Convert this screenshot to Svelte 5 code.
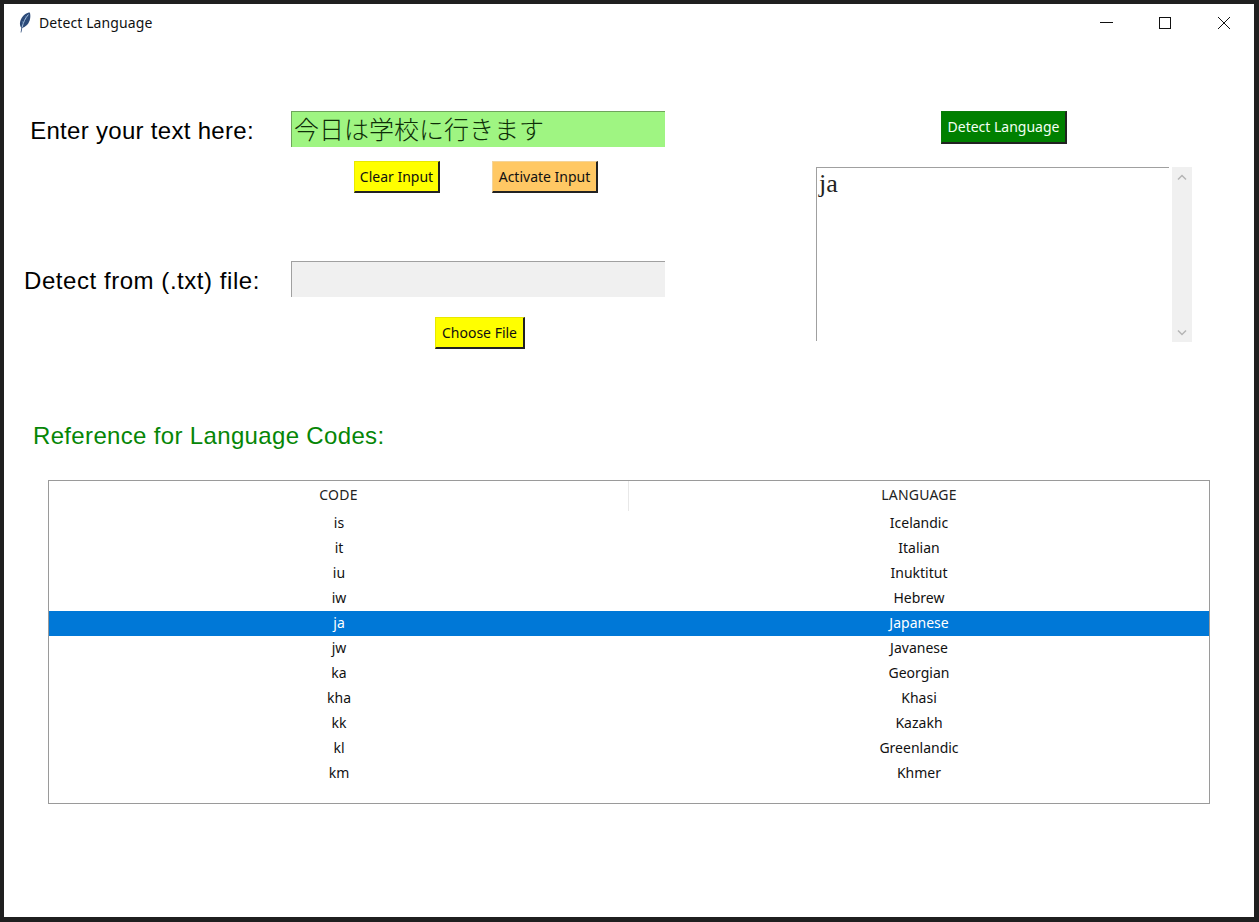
<script lang="ts">
  const rows = [
    ['is', 'Icelandic'],
    ['it', 'Italian'],
    ['iu', 'Inuktitut'],
    ['iw', 'Hebrew'],
    ['ja', 'Japanese'],
    ['jw', 'Javanese'],
    ['ka', 'Georgian'],
    ['kha', 'Khasi'],
    ['kk', 'Kazakh'],
    ['kl', 'Greenlandic'],
    ['km', 'Khmer']
  ];
  const selected = 'ja';
</script>

<div class="window">
  <div class="titlebar">
    <svg class="feather" width="14" height="21" viewBox="0 0 14 21">
      <path d="M2.6 20.5 C3 18.5 3.2 17 3.4 15.6 C1 13.5 1.2 7 7 2.2 C8.6 1 10.6 0.4 11.8 0.4 C13 3.5 12.4 9.5 9 13 C7.4 14.6 5.4 15.6 4.3 15.8 C4 17.4 3.7 19 3.3 20.5 Z" fill="#2c4a78" />
      <path d="M10.4 2.6 C7.4 6 5.2 10.4 4.2 15" stroke="#a9c3e0" stroke-width="1" fill="none" />
      <path d="M4 9.5 L5.6 11 M7.4 4.6 L8.8 6.2" stroke="#6f93bd" stroke-width="0.8" fill="none" />
    </svg>
    <span class="title">Detect Language</span>
    <div class="controls">
      <svg width="14" height="14" viewBox="0 0 14 14"><path d="M0 6.5H13" stroke="#111" fill="none" /></svg>
      <svg width="14" height="14" viewBox="0 0 14 14"><rect x="1.5" y="1.5" width="11" height="11" stroke="#111" fill="none" /></svg>
      <svg width="14" height="14" viewBox="0 0 14 14"><path d="M1 1L13 13M13 1L1 13" stroke="#111" fill="none" /></svg>
    </div>
  </div>

  <div class="top">
    <div class="form">
      <label class="lbl" for="txt">Enter your text here:</label>
      <input id="txt" class="entry active" value="今日は学校に行きます" readonly />
      <div class="btns first">
        <button class="btn yellow clear">Clear Input</button>
        <button class="btn orange activate">Activate Input</button>
      </div>
      <label class="lbl second wide" for="file">Detect from (.txt) file:</label>
      <input id="file" class="entry second off" readonly />
      <div class="btns last">
        <button class="btn yellow choose">Choose File</button>
      </div>
    </div>

    <div class="output">
      <button class="btn green detect">Detect Language</button>
      <div class="result">
        <div class="result-text">ja</div>
        <div class="scroll">
          <svg width="10" height="7" viewBox="0 0 10 7"><path d="M1 5.5L5 1.5L9 5.5" stroke="#b4b4b4" stroke-width="1.5" fill="none" /></svg>
          <svg width="10" height="7" viewBox="0 0 10 7"><path d="M1 1.5L5 5.5L9 1.5" stroke="#b4b4b4" stroke-width="1.5" fill="none" /></svg>
        </div>
      </div>
    </div>
  </div>

  <h2 class="ref">Reference for Language Codes:</h2>

  <div class="tree">
    <div class="tree-head">
      <div class="col sep">CODE</div>
      <div class="col">LANGUAGE</div>
    </div>
    {#each rows as r}
      <div class="row" class:sel={r[0] === selected}>
        <div class="col">{r[0]}</div>
        <div class="col">{r[1]}</div>
      </div>
    {/each}
  </div>
</div>

<style>
  :global(body) { background: #1f1f1f; }
  .window {
    margin: 4px 5px 0 4px; height: 913px; background: #fff;
    font-family: "Noto Sans", sans-serif; color: #111;
  }
  .titlebar { height: 38px; display: flex; align-items: center; }
  .feather { margin-left: 14px; margin-top: -1px; }
  .title { font-size: 14px; margin-left: 7px; letter-spacing: 0.1px; margin-top: -1px; }
  .controls { margin-left: auto; display: flex; gap: 45px; margin-right: 23px; }
  .controls svg:first-child { margin-right: -1px; margin-left: 1px; }

  .top { display: flex; padding-top: 69px; }
  .form {
    display: grid; grid-template-columns: 276px 374px; column-gap: 11px;
    grid-template-rows: 36px 46px 104px 52px;
    align-items: start; height: 238px;
  }
  .lbl {
    font-family: "Liberation Sans", sans-serif; font-size: 24px; color: #000;
    text-align: center; line-height: 40px; white-space: nowrap; letter-spacing: 0.3px;
    grid-column: 1; grid-row: 1;
  }
  .lbl.wide { letter-spacing: 0.55px; }
  .entry {
    box-sizing: border-box; width: 374px; height: 36px; padding: 0 0 0 2px; margin: 0;
    border: 0; border-top: 1px solid #a0a0a0; border-left: 1px solid #a0a0a0; outline: none;
    grid-column: 2; grid-row: 1;
  }
  .entry.active {
    background: #9ff582; border-color: #6fa45c; color: #0e2e08; padding-bottom: 4px;
    font-family: "Noto Sans CJK JP", sans-serif; font-size: 25px; font-weight: 300;
  }
  .entry.off { background: #f0f0f0; }
  .lbl.second, .entry.second { grid-row: 3; align-self: end; }
  .lbl.second { margin-bottom: -4px; }
  .btns { grid-column: 2; display: flex; height: 32px; }
  .first { grid-row: 2; margin-top: 14px; }
  .last { grid-row: 4; margin-top: 20px; }
  .btn {
    box-sizing: border-box; height: 32px; padding: 0; margin: 0;
    border: 1px solid #f4f4f4; border-right: 2px solid #222; border-bottom: 2px solid #222;
    font-family: "Noto Sans", sans-serif; font-size: 14px; color: #111; white-space: nowrap;
  }
  .yellow { background: #ffff00; border-left-color: #e8e800; border-top-color: #e8e800; }
  .orange { background: #ffc864; border-left-color: #f4d49a; border-top-color: #f4d49a; }
  .green { background: #008000; color: #f2fff2; border-left-color: #0a7a0a; border-top-color: #0a7a0a; }
  .clear { width: 86px; margin-left: 63px; }
  .activate { width: 106px; margin-left: 52px; }
  .choose { width: 90px; margin-left: 144px; }

  .output { width: 376px; margin-left: 151px; display: flex; flex-direction: column; align-items: center; }
  .detect { width: 126px; height: 33px; padding-bottom: 2px; }
  .result { display: flex; width: 376px; height: 175px; margin-top: 23px; }
  .result-text {
    width: 353px; box-sizing: border-box; height: 174px; border-top: 1px solid #a0a0a0; border-left: 1px solid #a0a0a0;
    font-family: "Liberation Serif", serif; font-size: 26px; line-height: 32px; color: #222; padding-left: 2px;
  }
  .scroll {
    width: 20px; margin-left: 3px; background: #f0f0f0; display: flex; flex-direction: column;
    justify-content: space-between; align-items: center; padding: 7px 0 6px; box-sizing: border-box;
  }

  .ref {
    margin: 72px 0 0 29px; font-family: "Liberation Sans", sans-serif; font-size: 24px; font-weight: 400;
    line-height: 30px; color: #068606; letter-spacing: 0.34px;
  }

  .tree {
    box-sizing: border-box; width: 1162px; height: 324px; margin: 29px 0 0 44px;
    border: 1px solid #9a9a9a; font-size: 14px;
  }
  .tree-head { display: flex; height: 30px; color: #222; }
  .tree-head .col { line-height: 28px; letter-spacing: 0.2px; }
  .col { flex: 1; text-align: center; }
  .sep { flex: 0 0 580px; box-sizing: border-box; border-right: 1px solid #e8e8e8; }
  .row { display: flex; height: 25px; line-height: 23px; }
  .row .col:first-child { flex: 0 0 580px; }
  .row.sel { background: #0078d7; color: #fff; }
</style>
